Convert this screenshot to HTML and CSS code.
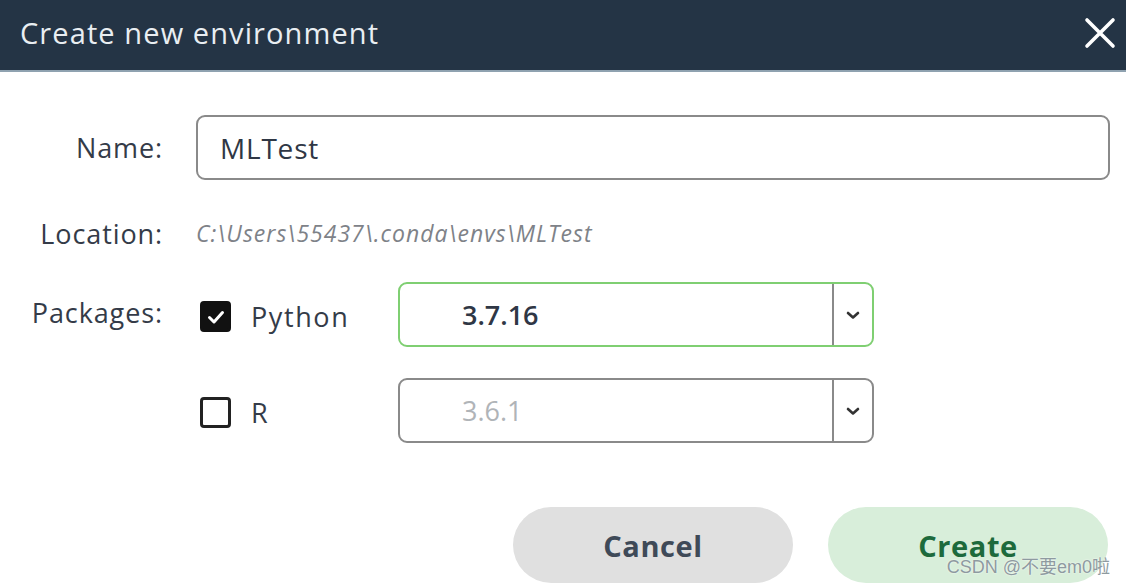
FILE: index.html
```html
<!DOCTYPE html>
<html>
<head>
<meta charset="utf-8">
<link rel="stylesheet" href="styles.css">
</head>
<body>
<div class="dialog">
  <header class="titlebar">
    <span class="title">Create new environment</span>
    <svg class="close" width="32" height="32" viewBox="0 0 32 32"><path d="M3 3 L29 29 M29 3 L3 29" stroke="#ffffff" stroke-width="3.6" stroke-linecap="round"/></svg>
  </header>
  <main class="form">
    <div class="row row-name">
      <label class="label">Name:</label>
      <div class="input">MLTest</div>
    </div>
    <div class="row row-location">
      <label class="label">Location:</label>
      <div class="path">C:\Users\55437\.conda\envs\MLTest</div>
    </div>
    <div class="row row-packages">
      <label class="label label-packages">Packages:</label>
      <div class="packages">
        <div class="pkg">
          <span class="check checked"><svg width="20" height="20" viewBox="0 0 20 20"><path d="M3.5 10.5 L8 15 L16.5 5.5" fill="none" stroke="#fff" stroke-width="3" stroke-linecap="round" stroke-linejoin="round"/></svg></span>
          <span class="pkg-name">Python</span>
          <div class="select active"><span class="val">3.7.16</span><span class="arrow"><svg width="16" height="10" viewBox="0 0 16 10"><path d="M3 3 L8 7.5 L13 3" fill="none" stroke="#333" stroke-width="2.6" stroke-linecap="round" stroke-linejoin="round"/></svg></span></div>
        </div>
        <div class="pkg">
          <span class="check"></span>
          <span class="pkg-name">R</span>
          <div class="select"><span class="val dim">3.6.1</span><span class="arrow"><svg width="16" height="10" viewBox="0 0 16 10"><path d="M3 3 L8 7.5 L13 3" fill="none" stroke="#333" stroke-width="2.6" stroke-linecap="round" stroke-linejoin="round"/></svg></span></div>
        </div>
      </div>
    </div>
    <div class="actions">
      <button class="btn cancel">Cancel</button>
      <button class="btn create">Create</button>
    </div>
  </main>
  <div class="watermark">CSDN @不要em0啦</div>
</div>
</body>
</html>
```
FILE: styles.css
```css
* { box-sizing: border-box; }
html, body { margin: 0; padding: 0; background: #ffffff; }
body { width: 1126px; height: 585px; overflow: hidden; font-family: "Open Sans", "Noto Sans", sans-serif; color: #343b48; }
.dialog { position: relative; width: 1126px; height: 585px; }
.titlebar {
  height: 72px;
  background: #243445;
  border-bottom: 2px solid #8fa2b0;
  display: flex;
  align-items: center;
  justify-content: space-between;
  padding: 0 10px 6px 20px;
}
.title { color: #e9eef2; font-size: 29px; letter-spacing: 1.1px; }
.close { margin-top: 2px; }
.form { padding: 43px 16px 0 0; }
.row { display: grid; grid-template-columns: 163px 1fr; column-gap: 33px; align-items: center; }
.label { font-size: 27px; letter-spacing: 0.9px; text-align: right; color: #343b48; }
.input {
  height: 65px;
  border: 2px solid #8a8a8a;
  border-radius: 9px;
  padding-left: 22px;
  display: flex; align-items: center;
  font-size: 28px; letter-spacing: 0.8px; color: #2f3745;
}
.row-location { margin-top: 28px; height: 50px; }
.path { font-style: italic; font-size: 23px; color: #7e8288; letter-spacing: 1px; }
.row-packages { margin-top: 24px; align-items: start; }
.label-packages { margin-top: 12px; }
.packages { display: flex; flex-direction: column; gap: 31px; }
.pkg { display: flex; align-items: center; }
.check {
  width: 31px; height: 31px;
  border: 3px solid #222;
  border-radius: 4px;
  margin-left: 4px;
  margin-top: 4px;
  display: flex; align-items: center; justify-content: center;
}
.check.checked { background: #111; border-color: #111; }
.pkg-name { width: 167px; padding-left: 20px; font-size: 27px; letter-spacing: 1.6px; margin-top: 4px; color: #343b48; }
.select {
  width: 476px; height: 65px;
  border: 2px solid #8a8a8a;
  border-radius: 9px;
  display: flex; align-items: stretch;
}
.select.active { border-color: #7fcf72; }
.val { flex: 1; display: flex; align-items: center; padding-left: 62px; font-size: 27px; font-weight: 600; color: #2f3745; }
.val.dim { font-weight: 400; color: #b0b4b8; }
.arrow { width: 40px; border-left: 2px solid #8a8a8a; display: flex; align-items: center; justify-content: center; }
.actions { display: flex; justify-content: flex-end; gap: 35px; margin-top: 64px; padding-right: 2px; }
.btn {
  width: 280px; height: 76px;
  border: none; border-radius: 38px;
  font-family: inherit; font-size: 29px; font-weight: 700; letter-spacing: 0.6px;
}
.cancel { background: #e0e0e0; color: #3f4a58; }
.create { background: #d8eeda; color: #1d6a3c; }
.watermark {
  position: absolute; right: 16px; bottom: 7px;
  font-family: "Liberation Sans", "Noto Sans CJK SC", sans-serif;
  font-size: 18px; color: #8e9aa0;
  text-shadow: 0 0 2px #ffffff;
}
```
